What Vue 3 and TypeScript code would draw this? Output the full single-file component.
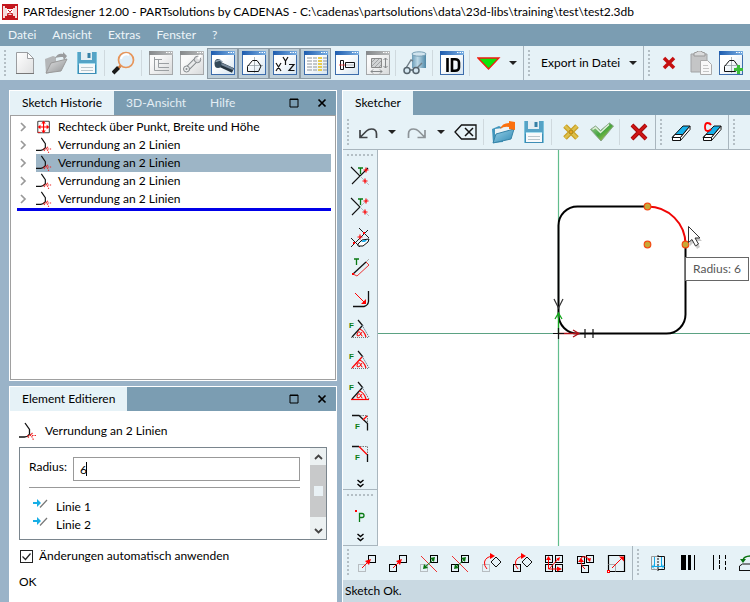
<script setup lang="ts">
import { ref } from 'vue'

interface ToolItem {
  kind: 'button' | 'separator' | 'caret'
  icon?: string
  label?: string
  pressed?: boolean
}

interface HistoryEntry {
  id: number
  icon: string
  label: string
}

const button = (icon: string, label: string, pressed = false): ToolItem => ({ kind: 'button', icon, label, pressed })
const separator: ToolItem = { kind: 'separator' }
const caret = (label: string): ToolItem => ({ kind: 'caret', label })

/** Small application window used as the base of many tool icons. */
const frame = (inner: string, active = true): string => `
  <rect x=".5" y=".5" width="23" height="23" fill="url(#${active ? 'paper' : 'paper-off'})" stroke="${active ? '#3c6cab' : '#a5a8aa'}"/>
  <rect width="24" height="4" fill="url(#${active ? 'bar' : 'bar-off'})"/>
  <path d="M17 1.500h1.500M19.500 1.500h1.500M22 1.500h1" stroke="#fff" stroke-width="1"/>${inner}`

const floppy = `
  <path d="M2 1h20v22H2z" fill="#55a3c6"/><path d="M2 14h20v9H2z" fill="#3d8db5"/>
  <path d="M6 1h11v8H6z" fill="#e3eef3"/><path d="M12.500 2h3v5h-3z" fill="#3580a5"/>
  <path d="M4 13h16v9H4z" fill="#f7f9fa"/><path d="M4 12.500h16" stroke="#a5dced"/>
  <path d="M6 16.500h12M6 19.500h12" stroke="#b9c6cc"/><path d="M2.500 1v22M21.500 1v22" stroke="#7cc3dc"/>`

const house = '<path d="M12.500 6v16M5 14.500h16" stroke="#8a959b" stroke-width=".7"/><path d="M5.500 20.500v-5l5-6h4.500l4 5.500-2.500 5.500z" fill="none" stroke="#111"/>'

const fillet = (thick: number): string => `
  <path d="M6 1l4.500 6.500v4.500q-2 3-5 3H0" fill="none" stroke="#111" stroke-width="${thick}"/>
  <path d="M11.500 12l3 6M8 13.500h9.500M13.500 11l-5 5" stroke="#e22" stroke-width="1.200" stroke-dasharray="1.500 1" fill="none"/>`

const angle = (first: string, base: string, arc: string): string => `
  <text x="1" y="10" font-family="Liberation Sans" font-weight="700" font-size="8" fill="#0a7c12">F</text>
  <path d="M10 2l5 6" stroke="#111" stroke-width="1.200"/><path d="M14 8L4 19" stroke="${first}" stroke-width="1.200"/>
  <path d="M14 7l7 12" stroke="#5b6f83" stroke-dasharray="1.500 1"/>
  <path d="M3 19.500h18" stroke="${base}" stroke-width="1.200" ${base === 'red' ? '' : 'stroke-dasharray="1 1"'}/>
  <path d="M11 11q5 1 7 8" fill="none" stroke="${arc}" stroke-width="1.200"/>
  <path d="M14 14q-2 4-4 4t-.5-3 3 .5 2 2.500" fill="none" stroke="red"/>`

const star = (x: number, y: number): string => `<path d="M${x - 2.5} ${y}h5M${x} ${y - 2.5}v5" stroke="red" stroke-width="1.200"/>`
const greenT = (x: number, y: number): string => `<path d="M${x - 2.5} ${y}h5M${x} ${y}v6" stroke="#087a12" stroke-width="1.300" fill="none"/>`
const square = (x: number, y: number, color = '#000'): string => `<rect x="${x}" y="${y}" width="7" height="7" fill="none" stroke="${color}"/>`
const chainLink = (color: string): string => `${square(2.5, 14.5, color)}${square(12.5, 5.5)}<path d="M6 18l7-7" stroke="red"/><path d="M9 11l6-2-2 6z" fill="red"/>`
const mirror = (color: string): string => `${square(2.5, 14.5, color)}${square(12.5, 5.5)}<path d="M3 6l16 16" stroke="#e33"/><path d="M7 17l9-8" stroke="#08720f"/><path d="M17 7l-5 1 4 4zM5 19l5-1-4-4z" fill="#08720f"/>`
const rotate = (color: string): string => `${square(2.5, 14.5, color)}<path d="M11 12l5-5 5 5-5 5z" fill="none" stroke="#111"/><path d="M7 19Q4 16 4.500 12q1-5 8-6" fill="none" stroke="red"/><path d="M10 3l5 3-5 3z" fill="red"/>`
const eraser = '<path d="M3 17.500l11-11.500h7L11 17.500z" fill="#17b0ea" stroke="#111"/><path d="M3.500 17.500h8v3h-8zM6 14.500h8l-2.500 3h-8z" fill="#fff" stroke="#111"/><path d="M11.500 20.500L21 9.500V6l-9.500 11.500z" fill="#fff" stroke="#111"/>'
const windowPen = 'fill="none" stroke="#111"'

const icons: Record<string, string> = {
  newFile: '<path d="M3.500 1.500h11l6 6v15h-17z" fill="url(#sheet)" stroke="#9b9da0"/><path d="M14.500 1.500v6h6z" fill="#fff" stroke="#9b9da0"/><path d="M3 22.500h18" stroke="#777"/>',
  openOff: '<path d="M1 8l8-3 3 1v14l-10 3z" fill="#b4b6b8"/><path d="M2 22l5-10 16-4-6 12z" fill="url(#grey)" stroke="#999"/><path d="M11 7c2-4 5-5 8-4V1l4 4-3 4-1-3c-3 0-5 0-8 1z" fill="#9a9c9e"/>',
  save: floppy,
  search: '<circle cx="14" cy="9" r="7.500" fill="#dfeef8" stroke="#e7955a" stroke-width="1.700"/><path d="M9 8a5.500 5.500 0 0 1 8-4" stroke="#fff" stroke-width="2" fill="none"/><path d="M8.500 15L6 17.500" stroke="#d57a3a" stroke-width="2.500"/><path d="M6.500 16.500L1 22" stroke="#1a1a1a" stroke-width="4"/>',
  tree: frame('<path d="M5.500 6v13.500H20M5.500 8.500H13M9.500 9v7.500H20M9.500 12.500H20" fill="none" stroke="#9b9fa2"/>', false),
  wrench: frame('<path d="M7 18l10-10" stroke="#85898c" stroke-width="5"/><path d="M7 18l10-10" stroke="#e9eaeb" stroke-width="3"/><circle cx="6.500" cy="18" r="3" fill="#eceeef" stroke="#85898c"/><circle cx="17.500" cy="8.500" r="3.200" fill="#dcdddf" stroke="#85898c"/><circle cx="6.500" cy="18" r="1" fill="#85898c"/><path d="M18 8l3-4" stroke="#fff" stroke-width="2.500"/>', false),
  bolt: frame('<path d="M7 12.500l15 7" stroke="#24333e" stroke-width="5"/><path d="M8 12l14 6" stroke="#75889a" stroke-width="2"/><ellipse cx="7" cy="12.500" rx="3.500" ry="4.500" fill="#344959"/><path d="M4.500 10.500l4-1.500 3 2" stroke="#90a2b1" fill="none" stroke-width="1.500"/>'),
  sketch: frame(house),
  axes: frame(`<path d="M3 12l5 8M8 12l-5 8M10 6l2.500 4L15 6M12.500 10v4M16 13.500h5l-5 6h5.500" ${windowPen} stroke-width="1.200"/>`),
  table: frame('<path d="M3 7h5M9 7h4M3 10h5M9 10h4M3 13h5M9 13h4M3 16h5M9 16h4M3 19h5M9 19h4M19 7h4M19 10h4M19 13h4M19 16h4M19 19h4" stroke="#8d949a"/><path d="M14 7h4M14 10h4M14 13h4M14 16h4M14 19h4" stroke="#e7cc4e" stroke-width="2"/>'),
  bolt2d: frame(`<path d="M5.500 9.500h3v9h-3zM10.500 11.500h9v5h-9z" ${windowPen}/><path d="M4 14h6" stroke="#e33" stroke-width=".8"/><path d="M11 14h8" stroke="#aaa" stroke-width=".8"/>`),
  dims: frame('<path d="M5.500 7.500h10v9h-10z" fill="#d1d3d4" stroke="#888"/><path d="M6 11l4-4M6 15l8-8M9 16l6-6M13 16l2-2" stroke="#8b8e90" stroke-width=".7"/><path d="M19.500 7v10M5 20.500h11M17.500 9l2-2 2 2M17.500 15l2 2 2-2M7 18.500l-2 2 2 2M14 18.500l2 2-2 2" fill="none" stroke="#85888a"/>', false),
  glasses: '<path d="M9 2v15h14V2z" fill="url(#steel)"/><ellipse cx="16" cy="3" rx="7" ry="2.200" fill="#d1e4ee" stroke="#79a0b5"/><path d="M3 17l5-8 2 1M14 17l5-5" fill="none" stroke="#707e87" stroke-width="1.400"/><circle cx="4" cy="19.500" r="3" fill="#d6e8f2" stroke="#55636c" stroke-width="1.500"/><circle cx="13" cy="19.500" r="3" fill="#d6e8f2" stroke="#55636c" stroke-width="1.500"/><path d="M7 19h3" stroke="#55636c" stroke-width="1.500"/>',
  ident: frame('<path d="M7.500 7v14M12 8.200h3q4 0 4 3.500v4.500q0 3.500-4 3.500h-3z" fill="none" stroke="#000" stroke-width="2.600"/>'),
  filter: '<path d="M1 7h21L11.500 18z" fill="#0be60b" stroke="#f01d10" stroke-width="1.300"/>',
  cancelSmall: '<path d="M7 7l10 10M17 7L7 17" stroke="#c51010" stroke-width="3.500"/>',
  clipboard: '<path d="M3 3h16v18H3z" fill="#c4c5c6" stroke="#a2a3a5"/><path d="M6 5V2l3-1 1-1h3l1 1 3 1v3z" fill="#dadbdc" stroke="#999"/><path d="M12.500 9.500h7l4 4v10h-11z" fill="#f8f8f8" stroke="#aaa"/><path d="M15 14.500h5M15 17.500h6M15 20.500h6" stroke="#c5c5c5"/>',
  sketchAdd: frame(house + '<path d="M19.500 14v9M15 18.500h9" stroke="#39bd38" stroke-width="3"/>'),
  undo: '<path d="M4 10v7.500h7.500M4.500 17l6-6q2-2 5-2 5 0 5 5v4" fill="none" stroke="#3f4346" stroke-width="1.700"/>',
  redo: '<path d="M20 10v7.500h-7.500M19.500 17l-6-6q-2-2-5-2-5 0-5 5v4" fill="none" stroke="#8d9498" stroke-width="1.700"/>',
  backspace: '<path d="M1 12l6.500-7H22v14H7.500z" fill="none" stroke="#111" stroke-width="1.300"/><path d="M11 8l8 8M19 8l-8 8" stroke="#111" stroke-width="1.500"/>',
  open: '<path d="M1 9l7-3 4 2v14l-10 1z" fill="#4196bd"/><path d="M4 9l15-2v9L4 21z" fill="#edf3f5"/><path d="M2 23l3-9 18-5-3 10z" fill="url(#folder)" stroke="#3583a7"/><path d="M9 9Q11 3 18 3V1l6 1v8l-6-1V7q-5-1-9 2z" fill="#fb700e"/>',
  discard: '<path d="M6 6l12 12M18 6L6 18" stroke="#c99f22" stroke-width="5"/><path d="M6 6l12 12M18 6L6 18" stroke="#dcc04d" stroke-width="2.500"/><circle cx="12" cy="12" r="2" fill="#e7a522" stroke="#aa8617"/>',
  accept: '<path d="M.5 9.500l5-3.500 5 4.500 9-7.500 4 3-12.500 15z" fill="url(#check)" stroke="#8aa58a"/><path d="M2.500 9.500l3-2 5 5L19 4.500" fill="none" stroke="#e2efdc" stroke-width="1.500"/>',
  cancel: '<path d="M5 5l14 14M19 5L5 19" stroke="#a40c0c" stroke-width="4"/><path d="M5 5l14 14M19 5L5 19" stroke="#d11515" stroke-width="2"/>',
  eraser,
  eraserC: `${eraser}<path d="M11 5Q10 3 7.500 3 5 3 5 7t2.500 4Q10 11 11 9" fill="none" stroke="#f00" stroke-width="1.800"/>`,
  box: '<path d="M8.500 4.500h14v15h-14z" fill="#fff" stroke="#111"/>',
  trimOne: `<path d="M3 4l9 9-8 8M12 13l8-8" fill="none" stroke="#111" stroke-width="1.100"/><path d="M12 13l9 9" stroke="#b5bcc2"/>${greenT(12.5, 5)}${star(18, 7)}${star(17, 18)}`,
  trimBoth: `<path d="M3 4l9 9-8 8" fill="none" stroke="#111" stroke-width="1.100"/><path d="M12 13l9 9M12 13l8-8" stroke="#b5bcc2"/>${greenT(12.5, 5)}${star(18, 7)}${star(17, 18)}`,
  trimErase: `<path d="M11 3l10 10M3 13l9 9M3 22L20 5" stroke="#222"/>${star(12, 12)}<path d="M15 7h2v2h-2zM5 17h2v2H5z" fill="red"/><path d="M10 19l4-4 7-1-1 3-5 4h-5z" fill="#fff" stroke="#111"/><path d="M13 17l2-2h4l-2 2z" fill="#22aee8"/>`,
  offset: `${greenT(8.5, 3)}<path d="M5 18L18 6" stroke="#111" stroke-width="1.300"/><path d="M5 18l4 2L21 9l-3-3" fill="none" stroke="#e33"/><path d="M18 6l3-3" stroke="#aaa"/><rect x="4" y="17" width="2" height="2" fill="red"/>`,
  corner: '<path d="M5 19.500h11q4-1 4.500-5V4" fill="none" stroke="#111" stroke-width="1.300"/><path d="M7 6l9 9" stroke="red"/><path d="M13 17l5 0v-5z" fill="red"/>',
  angleOne: angle('#111', '#777', 'red'),
  angleTwo: angle('red', '#777', 'red'),
  angleBase: angle('#111', 'red', 'red'),
  chamferOne: '<path d="M4 4.500h7l8.500 8v7" fill="none" stroke="#111" stroke-width="1.300"/><path d="M12 4.500h7.500v7" fill="none" stroke="#777" stroke-dasharray="1.500 1"/><path d="M15 9l4-4" stroke="red" stroke-width="1.200"/><text x="7" y="18" font-family="Liberation Sans" font-weight="700" font-size="8" fill="#0a7c12">F</text>',
  chamferTwo: '<path d="M4 4.500h7M19.500 12v8" fill="none" stroke="#111" stroke-width="1.300"/><path d="M12 4.500h7.500v7" fill="none" stroke="#777" stroke-dasharray="1.500 1"/><path d="M11 4.500l8 8" stroke="red" stroke-width="1.200"/><text x="7" y="18" font-family="Liberation Sans" font-weight="700" font-size="8" fill="#0a7c12">F</text>',
  point: '<rect x="7" y="7" width="2" height="2" fill="red"/><path d="M11.500 19v-8.500h2.500q2 0 2 2t-2 2h-2.500" fill="none" stroke="#087a12" stroke-width="1.300"/>',
  moveLink: chainLink('#b7bdc1'),
  copyLink: chainLink('#000'),
  mirrorMove: mirror('#b7bdc1'),
  mirrorCopy: mirror('#000'),
  rotateMove: rotate('#b7bdc1'),
  rotateCopy: rotate('#000'),
  gridCopy: `${square(3.5, 5.5)}${square(13.5, 5.5)}${square(3.5, 14.5)}${square(13.5, 14.5)}<path d="M6.500 9v10h11M7 19L17 8" fill="none" stroke="red"/><path d="M4 10l2.500-4L9 10zM15 16.500l5 2.500-5 2.500zM14 9l4-2-1 4z" fill="red"/>`,
  circleCopy: `${square(4.5, 6.5)}${square(13.5, 5.5)}${square(8.5, 15.5)}<path d="M12 19q-5-4-4-11 3-3 8 1" fill="none" stroke="red"/><path d="M5 12l3-4 3 4zM18 8l-1 4-3-3z" fill="red"/>`,
  scale: '<path d="M4.500 5.500h16v16h-16z" fill="none" stroke="#000" stroke-width="1.200"/><path d="M4.500 14.500h7v7" fill="none" stroke="#aaa"/><path d="M8 18L19 7" stroke="red"/><path d="M15 6.500h5v5z" fill="red"/><rect x="3.500" y="20.500" width="2" height="2" fill="#fff" stroke="red"/>',
  plane: '<path d="M12 6.500H5.500v13h7" fill="none" stroke="#999"/><path d="M12 6.500h6.500v13H12" fill="none" stroke="#111"/><path d="M12 5v16" stroke="#111" stroke-dasharray="2 1"/><path d="M8.500 7v9M15.500 7v9M6 16.500h12M8 14.500l-2 2 2 2M16 14.500l2 2-2 2" fill="none" stroke="#10a9e8"/>',
  thickness: '<path d="M4 5h5v15H4zM11 5h3v15h-3zM17 5h1v15h-1z" fill="#000"/>',
  lineStyle: '<path d="M5.500 5v15" stroke="#000"/><path d="M11.500 5v15" stroke="#000" stroke-dasharray="4 1"/><path d="M17.500 5v15" stroke="#000" stroke-dasharray="4 2"/>',
  loop: '<path d="M4 10q1-4 8-4" fill="none" stroke="#08720f" stroke-width="1.300"/><path d="M1 9h6l-3 4z" fill="#08720f"/><path d="M.5 21v-5l3-2H20M.5 20.500H20" fill="none" stroke="#111"/>',
}

const smallIcons: Record<string, string> = {
  rectangle: '<rect x="2" y="2.500" width="13" height="13" rx="1" fill="#fff" stroke="#444" stroke-width="1.200"/><path d="M4 9h9M8.500 4v10" stroke="red" stroke-width="1.300"/><path d="M6 5l2.500-3L11 5zM6 13l2.500 3 2.500-3zM5 6.500L2 9l3 2.500zM12 6.500L15 9l-3 2.500z" fill="red"/><path d="M2 15h3" stroke="red"/>',
  fillet: fillet(1.3),
}

const mainTools: ToolItem[] = [
  button('newFile', 'Neu'),
  button('openOff', 'Öffnen'),
  button('save', 'Speichern'),
  separator,
  button('search', 'Suchen'),
  separator,
  button('tree', 'Baum'),
  button('wrench', 'Werkzeug'),
  button('bolt', '3D-Ansicht', true),
  button('sketch', 'Sketch', true),
  button('axes', 'Achsen', true),
  button('table', 'Tabelle', true),
  button('bolt2d', '2D-Ansicht'),
  button('dims', 'Maße'),
  separator,
  button('glasses', 'Vorschau'),
  separator,
  button('ident', 'ID'),
  separator,
  button('filter', 'Filter'),
  caret('Filter wählen'),
]
const exportTools: ToolItem[] = [
  button('cancelSmall', 'Entfernen'),
  button('clipboard', 'Einfügen'),
  button('sketchAdd', 'Sketch hinzufügen'),
]
const sketchTools: ToolItem[] = [
  button('undo', 'Rückgängig'),
  caret('Schritte zurück'),
  button('redo', 'Wiederholen'),
  caret('Schritte vor'),
  button('backspace', 'Löschen'),
  separator,
  button('open', 'Öffnen'),
  button('save', 'Speichern'),
  separator,
  button('discard', 'Verwerfen'),
  button('accept', 'Übernehmen'),
  separator,
  button('cancel', 'Abbrechen'),
]
const eraseTools: ToolItem[] = [button('eraser', 'Radieren'), button('eraserC', 'Constraints radieren')]
const frameTools: ToolItem[] = [button('box', 'Rahmen')]
const sideTools: ToolItem[] = [
  button('trimOne', 'Trimmen'),
  button('trimBoth', 'Beide trimmen'),
  button('trimErase', 'Schneiden'),
  button('offset', 'Versatz'),
  button('corner', 'Ecke'),
  button('angleOne', 'Winkel 1'),
  button('angleTwo', 'Winkel 2'),
  button('angleBase', 'Winkel 3'),
  button('chamferOne', 'Fase 1'),
  button('chamferTwo', 'Fase 2'),
]
const pointTools: ToolItem[] = [button('point', 'Punkt')]
const transformTools: ToolItem[] = [
  button('moveLink', 'Verschieben'),
  button('copyLink', 'Kopieren'),
  button('mirrorMove', 'Spiegeln'),
  button('mirrorCopy', 'Gespiegelt kopieren'),
  button('rotateMove', 'Drehen'),
  button('rotateCopy', 'Gedreht kopieren'),
  button('gridCopy', 'Raster'),
  button('circleCopy', 'Kreismuster'),
  button('scale', 'Skalieren'),
]
const lineTools: ToolItem[] = [
  button('plane', 'Ebene'),
  button('thickness', 'Linienstärke'),
  button('lineStyle', 'Linienart'),
  button('loop', 'Umkehren'),
]

const topGroups = [mainTools]
const sketchGroups = [sketchTools, eraseTools, frameTools]
const sideGroups = [sideTools, pointTools]
const bottomGroups = [transformTools, lineTools]

const menus = ['Datei', 'Ansicht', 'Extras', 'Fenster', '?']
const historyTabs = ['Sketch Historie', '3D-Ansicht', 'Hilfe']
const activeTab = ref('Sketch Historie')
const history: HistoryEntry[] = [
  { id: 1, icon: 'rectangle', label: 'Rechteck über Punkt, Breite und Höhe' },
  { id: 2, icon: 'fillet', label: 'Verrundung an 2 Linien' },
  { id: 3, icon: 'fillet', label: 'Verrundung an 2 Linien' },
  { id: 4, icon: 'fillet', label: 'Verrundung an 2 Linien' },
  { id: 5, icon: 'fillet', label: 'Verrundung an 2 Linien' },
]
const selectedId = ref(3)
const radius = ref('6')
const autoApply = ref(true)
const exportTarget = ref('Export in Datei')
const references = ['Linie 1', 'Linie 2']
</script>

<template>
  <div class="app">
    <svg class="defs" width="0" height="0" aria-hidden="true">
      <defs>
        <linearGradient id="paper" x1="0" y1="0" x2="1" y2="1"><stop offset=".4" stop-color="#fff" /><stop offset="1" stop-color="#d3e3ef" /></linearGradient>
        <linearGradient id="paper-off" x1="0" y1="0" x2="1" y2="1"><stop offset=".3" stop-color="#fafafa" /><stop offset="1" stop-color="#d7d9da" /></linearGradient>
        <linearGradient id="bar"><stop offset="0" stop-color="#1e5cae" /><stop offset="1" stop-color="#79aee2" /></linearGradient>
        <linearGradient id="bar-off"><stop offset="0" stop-color="#86898b" /><stop offset="1" stop-color="#b9bbbc" /></linearGradient>
        <linearGradient id="sheet" x1="0" y1="0" x2="1" y2="1"><stop offset="0" stop-color="#fff" /><stop offset="1" stop-color="#dedfe0" /></linearGradient>
        <linearGradient id="grey" x1="0" y1="0" x2="1" y2="1"><stop offset="0" stop-color="#e2e3e4" /><stop offset="1" stop-color="#919395" /></linearGradient>
        <linearGradient id="steel"><stop offset="0" stop-color="#6c9db8" /><stop offset=".4" stop-color="#bcd9e7" /><stop offset="1" stop-color="#4e87a6" /></linearGradient>
        <linearGradient id="folder" x1="0" y1="0" x2="1" y2="1"><stop offset="0" stop-color="#9bd3ea" /><stop offset="1" stop-color="#2f88b2" /></linearGradient>
        <linearGradient id="check" x1="0" y1="0" x2="1" y2="1"><stop offset="0" stop-color="#a9cfa2" /><stop offset=".5" stop-color="#45a53f" /><stop offset="1" stop-color="#d9d24d" /></linearGradient>
      </defs>
    </svg>

    <header class="title-bar">
      <svg width="16" height="16" viewBox="0 0 16 16" aria-hidden="true">
        <rect width="16" height="16" fill="#c5161d" />
        <path d="M1 2h2v2h2v8H3v2H1zM15 2h-2v2h-2v8h2v2h2z" fill="#f6dcdc" />
        <path d="M5 5h6v5l-3 1-3-1z" fill="#fff" /><path d="M6 6l2 2 2-2M5 10l3-1 3 1" stroke="#c5161d" fill="none" />
      </svg>
      <h1>PARTdesigner 12.00 - PARTsolutions by CADENAS - C:\cadenas\partsolutions\data\23d-libs\training\test\test2.3db</h1>
    </header>

    <nav class="menu-bar">
      <button v-for="menu in menus" :key="menu" type="button">{{ menu }}</button>
    </nav>

    <div class="toolbar">
      <div v-for="(group, g) in topGroups" :key="g" class="tool-group">
        <span class="grip"></span>
        <template v-for="(item, i) in group" :key="i">
          <span v-if="item.kind === 'separator'" class="separator"></span>
          <button v-else-if="item.kind === 'caret'" type="button" class="caret" :aria-label="item.label"></button>
          <button v-else type="button" class="tool" :class="{ pressed: item.pressed }" :aria-label="item.label">
            <svg width="24" height="24" viewBox="0 0 24 24" v-html="icons[item.icon!]"></svg>
          </button>
        </template>
      </div>
      <div class="tool-group">
        <span class="grip"></span>
        <div class="export">
          <select v-model="exportTarget" aria-label="Export">
            <option>Export in Datei</option>
          </select>
          <span class="caret"></span>
        </div>
      </div>
      <div class="tool-group">
        <span class="grip"></span>
        <button v-for="item in exportTools" :key="item.icon" type="button" class="tool" :aria-label="item.label">
          <svg width="24" height="24" viewBox="0 0 24 24" v-html="icons[item.icon!]"></svg>
        </button>
      </div>
    </div>

    <main class="workspace">
      <aside class="left">
        <section class="panel history">
          <div class="tab-bar">
            <button
              v-for="tab in historyTabs" :key="tab" type="button" class="tab"
              :class="{ active: tab === activeTab }" @click="activeTab = tab"
            >{{ tab }}</button>
            <div class="window-buttons">
              <button type="button" aria-label="Maximieren"><svg width="10" height="10" viewBox="0 0 10 10"><path d="M1 1h8v8H1zM1 1.500h8" fill="none" stroke="#000" /></svg></button>
              <button type="button" aria-label="Schließen"><svg width="10" height="10" viewBox="0 0 10 10"><path d="M1.500 1.500l7 7M8.500 1.500l-7 7" stroke="#000" stroke-width="1.700" /></svg></button>
            </div>
          </div>
          <div class="tree">
            <ul>
              <li v-for="entry in history" :key="entry.id">
                <svg class="expander" width="8" height="10" viewBox="0 0 8 10"><path d="M2 1l4 4-4 4" fill="none" stroke="#999" stroke-width="1.700" /></svg>
                <button type="button" class="entry" :class="{ selected: entry.id === selectedId }" @click="selectedId = entry.id">
                  <svg width="16" height="16" viewBox="0 0 18 18" v-html="smallIcons[entry.icon]"></svg>
                  <span>{{ entry.label }}</span>
                </button>
              </li>
            </ul>
          </div>
        </section>

        <section class="panel editor">
          <div class="tab-bar">
            <button type="button" class="tab active">Element Editieren</button>
            <div class="window-buttons">
              <button type="button" aria-label="Maximieren"><svg width="10" height="10" viewBox="0 0 10 10"><path d="M1 1h8v8H1zM1 1.500h8" fill="none" stroke="#000" /></svg></button>
              <button type="button" aria-label="Schließen"><svg width="10" height="10" viewBox="0 0 10 10"><path d="M1.500 1.500l7 7M8.500 1.500l-7 7" stroke="#000" stroke-width="1.700" /></svg></button>
            </div>
          </div>
          <form class="form" @submit.prevent>
            <h2>
              <svg width="18" height="20" viewBox="0 0 18 18" v-html="smallIcons.fillet"></svg>
              Verrundung an 2 Linien
            </h2>
            <div class="properties">
              <div class="fields">
                <div class="field">
                  <label for="radius">Radius:</label>
                  <div class="input-box">
                    <input id="radius" v-model="radius" type="text" />
                    <span class="text-cursor"></span>
                  </div>
                </div>
                <ul class="references">
                  <li v-for="name in references" :key="name">
                    <svg width="15" height="12" viewBox="0 0 15 12"><path d="M0 4h4V1l4 4-4 4V6H0z" fill="#17aee5" /><path d="M7 9.500L14 2" stroke="#777" stroke-width="1.200" /></svg>
                    <span>{{ name }}</span>
                  </li>
                </ul>
              </div>
              <div class="scrollbar">
                <button type="button" aria-label="Nach oben"><svg width="9" height="6" viewBox="0 0 9 6"><path d="M1 5l3.500-3.500L8 5" fill="none" stroke="#444" stroke-width="1.800" /></svg></button>
                <span class="thumb"></span>
                <button type="button" aria-label="Nach unten"><svg width="9" height="6" viewBox="0 0 9 6"><path d="M1 1l3.500 3.500L8 1" fill="none" stroke="#444" stroke-width="1.800" /></svg></button>
              </div>
            </div>
            <label class="check">
              <input v-model="autoApply" type="checkbox" />
              <svg width="13" height="13" viewBox="0 0 13 13"><rect x=".5" y=".5" width="12" height="12" fill="#fff" stroke="#222" /><path v-if="autoApply" d="M2.500 6.500l3 3 5-6" fill="none" stroke="#222" stroke-width="1.200" /></svg>
              Änderungen automatisch anwenden
            </label>
            <button type="submit" class="ok">OK</button>
          </form>
        </section>
      </aside>

      <section class="sketcher">
        <div class="tab-bar">
          <button type="button" class="tab active">Sketcher</button>
        </div>
        <div class="toolbar ruled">
          <div v-for="(group, g) in sketchGroups" :key="g" class="tool-group">
            <span class="grip"></span>
            <template v-for="(item, i) in group" :key="i">
              <span v-if="item.kind === 'separator'" class="separator"></span>
              <button v-else-if="item.kind === 'caret'" type="button" class="caret" :aria-label="item.label"></button>
              <button v-else type="button" class="tool" :aria-label="item.label">
                <svg width="24" height="24" viewBox="0 0 24 24" v-html="icons[item.icon!]"></svg>
              </button>
            </template>
          </div>
        </div>
        <div class="drawing">
          <div class="side-bar">
            <div v-for="(group, g) in sideGroups" :key="g" class="side-group">
              <span class="grip"></span>
              <button v-for="item in group" :key="item.icon" type="button" class="tool" :aria-label="item.label">
                <svg width="24" height="24" viewBox="0 0 24 24" v-html="icons[item.icon!]"></svg>
              </button>
              <button type="button" class="more" aria-label="Weitere">
                <svg width="7" height="9" viewBox="0 0 7 9"><path d="M.5 1l3 2.500L6.500 1M.5 5l3 2.500L6.500 5" fill="none" stroke="#000" stroke-width="1.400" /></svg>
              </button>
            </div>
          </div>
          <div class="canvas">
            <svg class="sketch" width="100%" height="100%" fill="none">
              <path d="M180.500 0V2000" stroke="#62bd8d" stroke-width="1.200" />
              <path d="M0 183.500H3000" stroke="#5ba283" />
              <path d="M269.500 56.500h-70a19 19 0 0 0-19 19v89a19 19 0 0 0 19 19h89a19 19 0 0 0 19-19v-70" stroke="#000" stroke-width="2" />
              <path d="M269.500 56.500a38 38 0 0 1 38 38" stroke="#f00505" stroke-width="2" />
              <path d="M176 149l4.500 9 4.500-9" stroke="#333" stroke-width="1.200" />
              <path d="M180.500 183v-19M177 169l3.500-6 3.500 6" stroke="#12a61b" stroke-width="1.300" />
              <path d="M181 183.500h19M195 180l6 3.500-6 3.500" stroke="#b01218" stroke-width="1.300" />
              <path d="M175 183.500h11M180.500 178v11M207 179v9M215 179v9" stroke="#111" stroke-width="1.200" />
              <g fill="#c7a836" stroke="#f34a13" stroke-width="1.200">
                <circle cx="269.500" cy="56.500" r="3.300" /><circle cx="307.500" cy="94.500" r="3.300" /><circle cx="269.500" cy="94.500" r="3.300" />
              </g>
              <path d="M312 79v17l4-4 3 7 3-2-3-6h5z" fill="#c9c9c9" />
              <path d="M310.500 76.500v16l3.500-3 3.500 6.500 3-2-3.500-6h5z" fill="#fff" stroke="#333" />
            </svg>
            <div class="tooltip" role="tooltip">Radius: 6</div>
          </div>
        </div>
        <div class="toolbar bottom">
          <div v-for="(group, g) in bottomGroups" :key="g" class="tool-group">
            <span class="grip"></span>
            <button v-for="item in group" :key="item.icon" type="button" class="tool" :aria-label="item.label">
              <svg width="24" height="24" viewBox="0 0 24 24" v-html="icons[item.icon!]"></svg>
            </button>
          </div>
        </div>
        <footer class="status">Sketch Ok.</footer>
      </section>
    </main>
  </div>
</template>

<style>
body {
  background: #9ab3c8;
  overflow: hidden;
}
</style>

<style scoped>
.app {
  display: flex;
  flex-direction: column;
  height: 100vh;
  font-family: Lato, "Open Sans", sans-serif;
  font-size: 12px;
  line-height: 18px;
  color: #000;
}
.app * { box-sizing: border-box; }
.defs { position: absolute; }
button, input, select {
  margin: 0;
  padding: 0;
  border: 0;
  background: none;
  font: inherit;
  color: inherit;
}
svg { display: block; flex: none; }
ul { margin: 0; padding: 0; list-style: none; }

.title-bar {
  display: flex;
  align-items: center;
  gap: 5px;
  height: 24px;
  flex: none;
  padding: 0 2px;
  background: #fff;
  white-space: nowrap;
}
h1, h2 { margin: 0; font-size: 12px; font-weight: 400; }
.menu-bar {
  display: flex;
  gap: 16px;
  height: 22px;
  flex: none;
  padding: 0 8px;
  background: #7b9db2;
  color: #eef5f9;
}

.toolbar {
  display: flex;
  flex: none;
  height: 34px;
  overflow: hidden;
  background: #e6f2f7;
}
.toolbar.ruled { height: 35px; border-bottom: 1px solid #a9b6be; }
.tool-group {
  display: flex;
  flex: none;
  align-items: center;
  padding-right: 1px;
  border-right: 1px solid #a9b6be;
}
.tool-group:last-child { border-right: 0; }
.bottom .tool-group { padding-bottom: 3px; }
.grip {
  flex: none;
  width: 2px;
  height: 26px;
  margin: 0 3px 0 4px;
  background: repeating-linear-gradient(#b4bfc5 0 2px, transparent 2px 4px);
}
.tool {
  display: grid;
  place-items: center;
  flex: none;
  width: 31px;
  height: 31px;
}
.tool.pressed { border: 1px solid #8c9ba5; background: #bdced8; }
.separator { flex: none; width: 6px; height: 26px; border-left: 2px solid transparent; border-right: 3px solid transparent; background: #cfd9de content-box; }
.caret {
  display: grid;
  place-items: center;
  flex: none;
  width: 18px;
  height: 31px;
}
.caret::before {
  content: "";
  border: 4px solid transparent;
  border-top-color: #222;
  border-bottom: 0;
}
.export { display: flex; align-items: center; padding-left: 8px; }
.export select { width: 83px; appearance: none; white-space: nowrap; }

.workspace {
  display: flex;
  flex: 1;
  gap: 5px;
  min-height: 0;
  padding: 10px 0 0 9px;
}
.left {
  display: flex;
  flex-direction: column;
  gap: 5px;
  flex: none;
  width: 328px;
}
.panel {
  display: flex;
  flex-direction: column;
  border: 1px solid #fff;
  border-bottom: 0;
  background: #fff;
}
.history { flex: 1; padding-bottom: 1px; }
.tab-bar {
  display: flex;
  flex: none;
  height: 24px;
  background: #7b9db2;
  color: #e4eef4;
}
.tab { padding: 0 12px; white-space: nowrap; }
.tab.active { background: #e6f2f7; color: #000; }
.window-buttons { display: flex; gap: 18px; margin-left: auto; padding-right: 9px; }
.tree { flex: 1; padding: 2px 4px 0 6px; border: 1px solid #a0a0a0; }
.tree ul { border-bottom: 3px solid #0000e8; }
.tree li { display: flex; align-items: center; height: 18px; }
.expander { margin: 0 9px 0 2px; }
.entry { display: flex; align-items: center; gap: 6px; flex: 1; height: 18px; white-space: nowrap; }
.entry.selected { background: #9db5c6; }

.editor { flex: none; }
.form { display: flex; flex-direction: column; padding: 10px 9px 11px; }
h2 { display: flex; align-items: center; gap: 8px; height: 20px; }
.properties {
  display: flex;
  height: 93px;
  margin-top: 6px;
  border: 1px solid #7a858d;
}
.fields { flex: 1; padding: 9px 10px 0 9px; }
.field {
  display: flex;
  gap: 6px;
  padding-bottom: 6px;
  border-bottom: 1px solid #999;
}
.field label { padding-top: 1px; }
.input-box { position: relative; flex: 1; }
.input-box input {
  display: block;
  width: 100%;
  height: 24px;
  padding: 0 6px;
  border: 1px solid #999;
  background: #fff;
  caret-color: transparent;
}
.text-cursor { position: absolute; left: 13px; top: 5px; width: 1px; height: 14px; background: #000; }
.references { padding: 10px 0 0 4px; }
.references li { display: flex; gap: 8px; height: 18px; }
.scrollbar { display: flex; flex-direction: column; width: 16px; background: #ecf1f2; }
.scrollbar button { display: grid; place-items: center; height: 17px; }
.thumb { display: grid; place-items: center; height: 52px; background: #c8c9ca; margin-bottom: 5px; }
.thumb::before { content: ""; width: 9px; height: 10px; background: #e9f1f5; }
.check { position: relative; display: flex; align-items: center; gap: 6px; height: 18px; margin: 7px 0 0 1px; }
.check input { position: absolute; width: 13px; height: 13px; opacity: 0; }
.ok { align-self: flex-start; margin-top: 8px; }

.sketcher {
  display: flex;
  flex-direction: column;
  flex: 1;
  min-width: 0;
  border: 1px solid #fff;
  border-width: 1px 0 0 1px;
}
.drawing { display: flex; flex: 1; min-height: 0; background: #fff; }
.side-bar { flex: none; width: 35px; }
.side-group {
  display: flex;
  flex-direction: column;
  align-items: center;
  background: #e6f2f7;
  border: 1px solid #a9b6be;
  border-width: 0 1px 1px 0;
}
.side-group .grip {
  width: 26px;
  height: 2px;
  margin: 4px 0 3px;
  background: repeating-linear-gradient(90deg, #b4bfc5 0 2px, transparent 2px 4px);
}
.more { display: grid; place-items: center; width: 31px; height: 15px; }
.side-group:first-child .more { height: 20px; padding-top: 8px; }
.canvas { position: relative; flex: 1; min-width: 0; overflow: hidden; }
.sketch { position: absolute; inset: 0; }
.tooltip {
  position: absolute;
  left: 307px;
  top: 107px;
  padding: 2px 7px;
  border: 1px solid #666;
  background: #fff;
  color: #575757;
  white-space: nowrap;
}
.status { flex: none; height: 22px; padding: 2px; background: #c9d9e2; }
</style>
